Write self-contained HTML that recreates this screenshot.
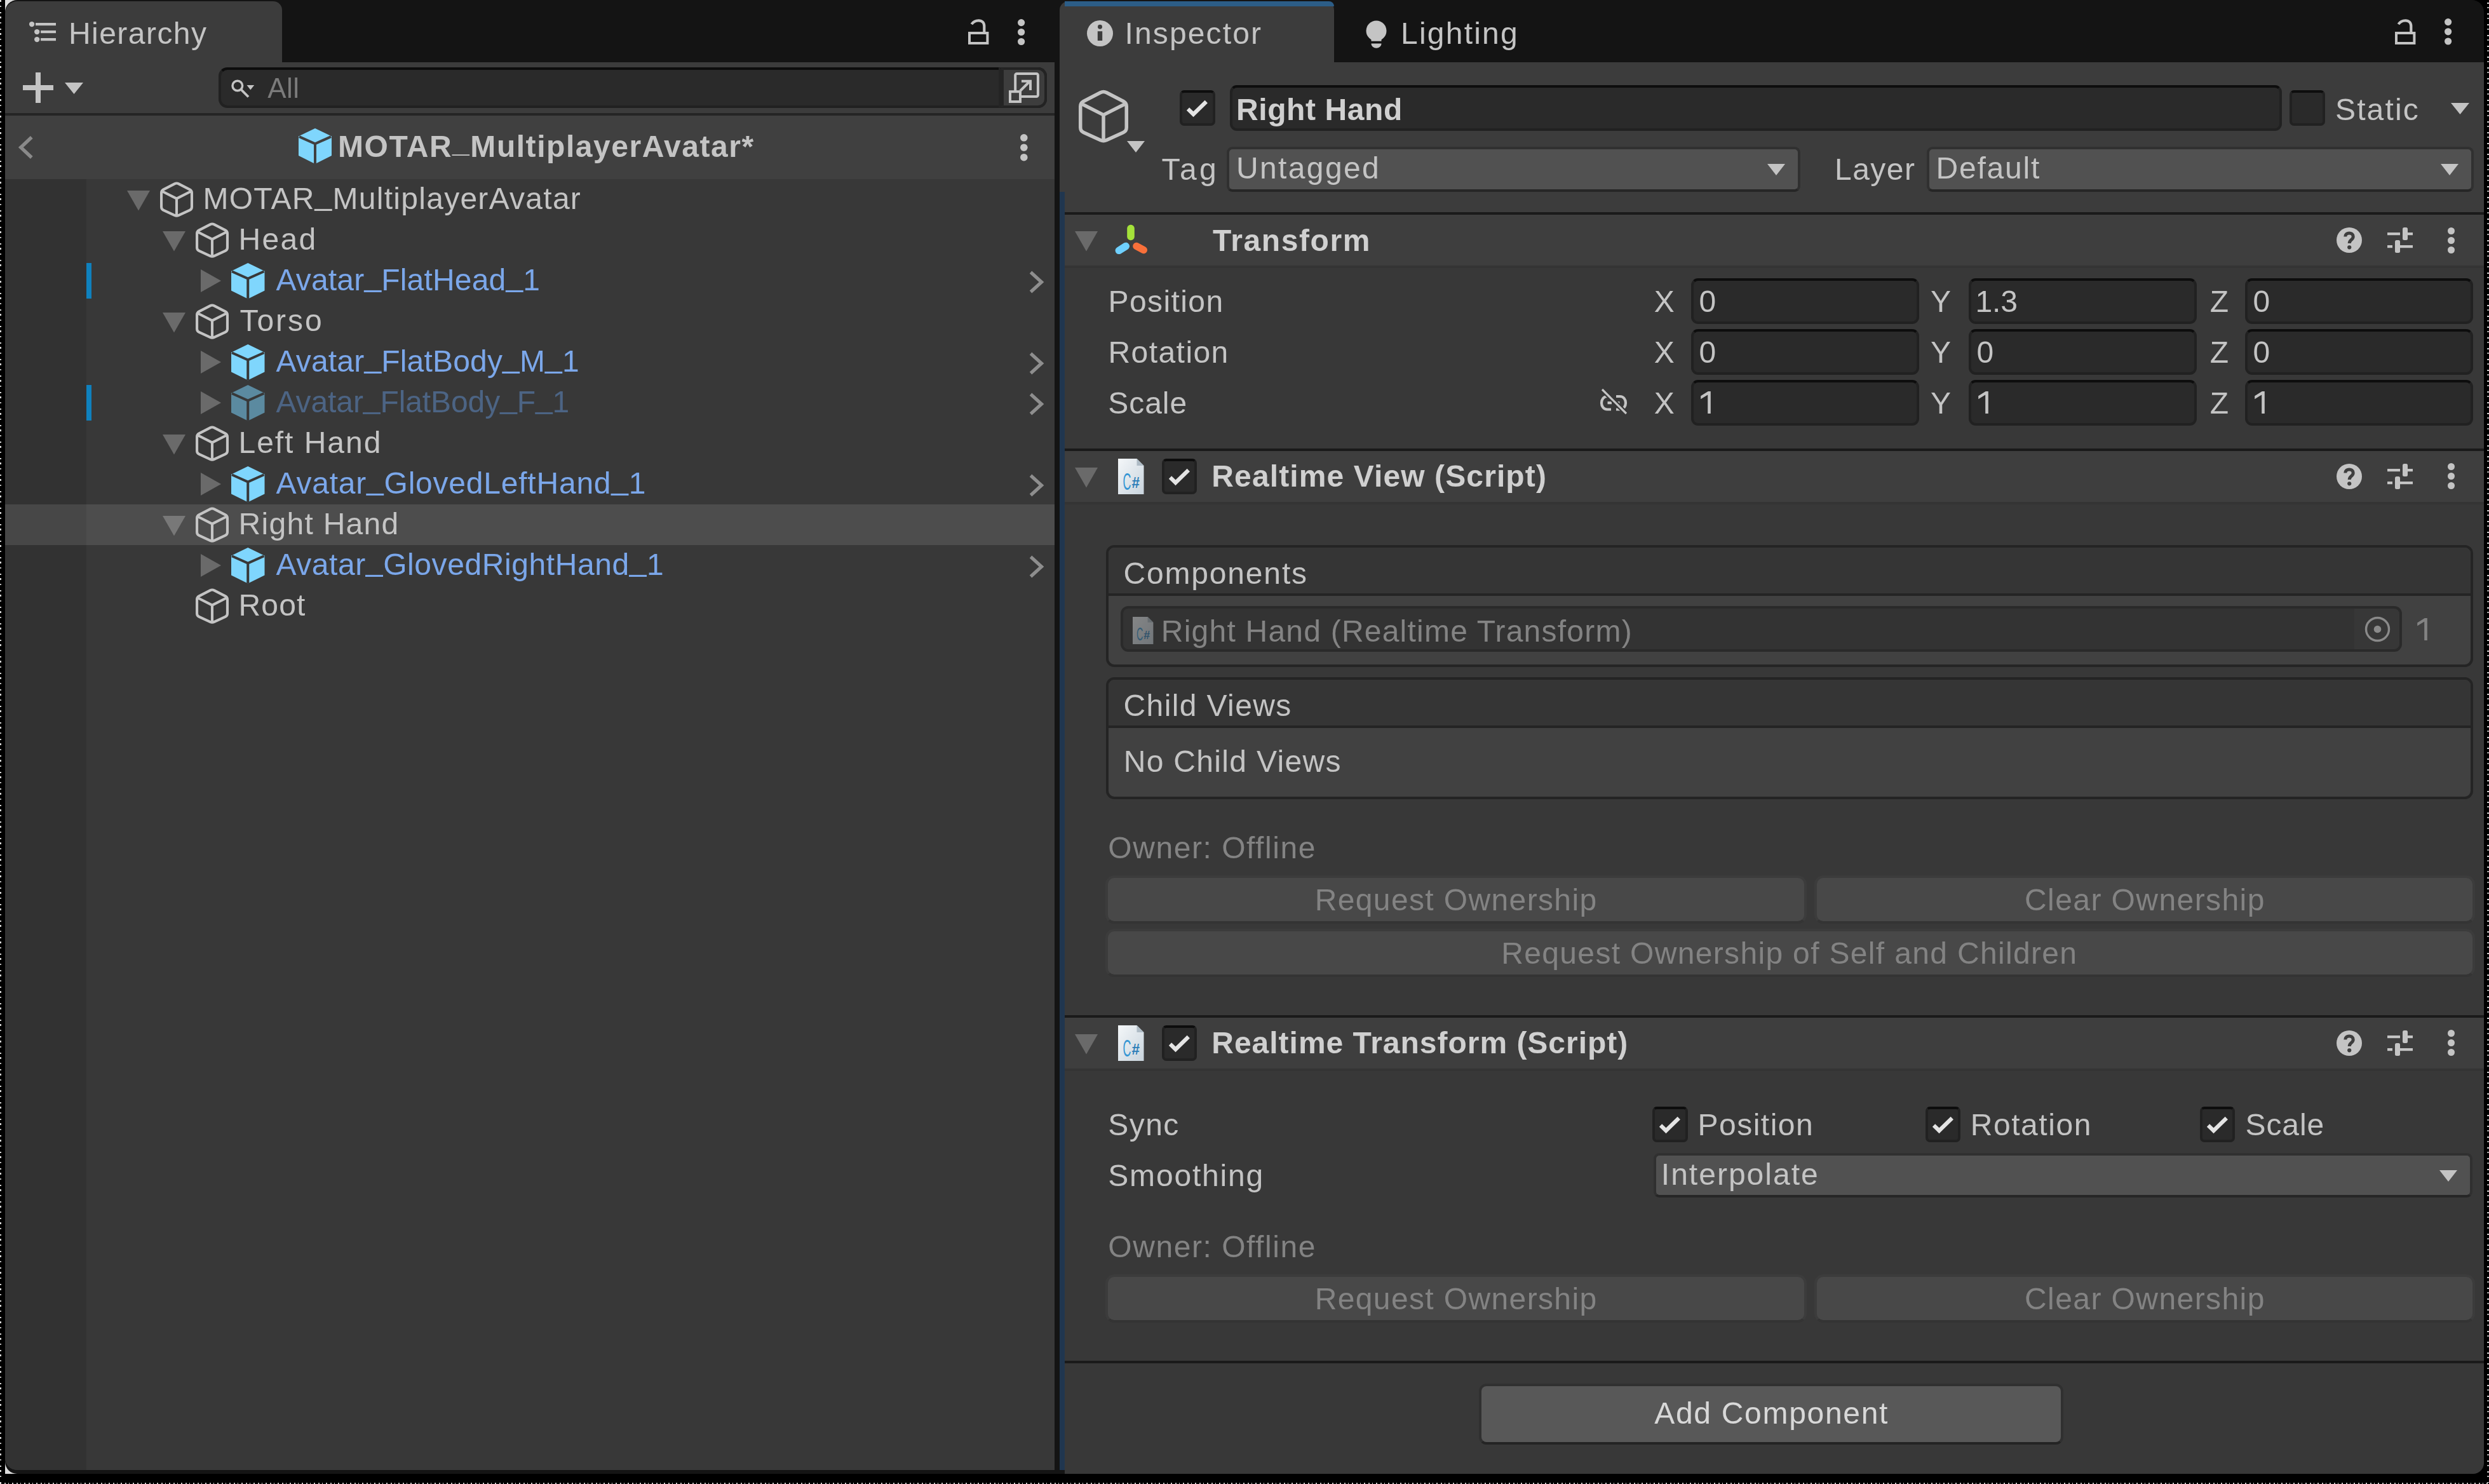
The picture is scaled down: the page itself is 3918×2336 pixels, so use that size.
<!DOCTYPE html>
<html><head><meta charset="utf-8"><title>Unity</title>
<style>
html,body{margin:0;padding:0;background:#000;}
body{width:3918px;height:2336px;position:relative;overflow:hidden;font-family:"Liberation Sans",sans-serif;font-size:48px;line-height:48px;}
div,svg,span{position:absolute;box-sizing:border-box;}
span{white-space:nowrap;}
i{font-style:normal;position:relative;top:-7.5px;}
svg{overflow:visible;}
</style></head><body>
<div style="left:8px;top:0px;width:24px;height:24px;background:#dcdcdc;"></div>
<div style="left:8px;top:2296px;width:24px;height:24px;background:#dcdcdc;"></div>
<div style="left:8px;top:0px;width:3902px;height:2320px;background:#141414;border-radius:19px;"></div>
<div style="left:8px;top:2px;width:436px;height:96px;background:#3c3c3c;border-radius:19px 14px 0 0;"></div>
<div style="left:8px;top:98px;width:1652px;height:80px;background:#3c3c3c;"></div>
<div style="left:8px;top:178px;width:1652px;height:4px;background:#252525;"></div>
<div style="left:8px;top:182px;width:1652px;height:100px;background:#404040;"></div>
<div style="left:8px;top:282px;width:1652px;height:2032px;background:#383838;border-radius:0 0 0 19px;"></div>
<div style="left:8px;top:282px;width:128px;height:2032px;background:#323232;border-radius:0 0 0 19px;"></div>
<div style="left:8px;top:794px;width:1652px;height:64px;background:#4d4d4d;"></div>
<div style="left:8px;top:794px;width:128px;height:64px;background:#474747;"></div>
<div style="left:1668px;top:2px;width:432px;height:96px;background:#3c3c3c;border-radius:14px 14px 0 0;"></div>
<div style="left:1676px;top:2px;width:424px;height:8px;background:#2c5d87;border-radius:0 14px 0 0;"></div>
<div style="left:1668px;top:98px;width:2242px;height:236px;background:#3c3c3c;"></div>
<div style="left:1676px;top:334px;width:2234px;height:1986px;background:#383838;border-radius:0 0 17px 0;"></div>
<div style="left:1668px;top:302px;width:8px;height:2012px;background:#20364f;"></div>
<div style="left:1676px;top:334px;width:2234px;height:4px;background:#1a1a1a;"></div>
<div style="left:1676px;top:338px;width:2234px;height:80px;background:#3e3e3e;"></div>
<div style="left:1676px;top:418px;width:2234px;height:3.5px;background:#343434;"></div>
<div style="left:1676px;top:706px;width:2234px;height:4px;background:#1a1a1a;"></div>
<div style="left:1676px;top:710px;width:2234px;height:80px;background:#3e3e3e;"></div>
<div style="left:1676px;top:790px;width:2234px;height:3.5px;background:#343434;"></div>
<div style="left:1676px;top:1598px;width:2234px;height:4px;background:#1a1a1a;"></div>
<div style="left:1676px;top:1602px;width:2234px;height:80px;background:#3e3e3e;"></div>
<div style="left:1676px;top:1682px;width:2234px;height:3.5px;background:#343434;"></div>
<div style="left:1676px;top:2142px;width:2234px;height:4px;background:#1a1a1a;"></div>
<svg style="left:46px;top:34px" width="42" height="33" viewBox="0 0 42 33"><circle cx="4.1" cy="4.1" r="4.2" fill="#c4c4c4"/><rect x="10.0" y="1.9999999999999996" width="32.0" height="4.2" fill="#c4c4c4"/><circle cx="12.2" cy="16.1" r="4.2" fill="#c4c4c4"/><rect x="18.1" y="14.000000000000002" width="23.9" height="4.2" fill="#c4c4c4"/><circle cx="12.2" cy="28.1" r="4.2" fill="#c4c4c4"/><rect x="18.1" y="26.0" width="23.9" height="4.2" fill="#c4c4c4"/></svg>
<svg style="left:1524px;top:30px" width="32.4" height="40" viewBox="0 0 32.4 40"><rect x="2" y="22" width="28.4" height="16" fill="none" stroke="#c4c4c4" stroke-width="4"/><path d="M5.4 8.2C8.5 3.4 12.5 2.3 16.5 2.3C22 2.3 25.3 5.8 25.3 11V21" fill="none" stroke="#c4c4c4" stroke-width="4.2"/></svg>
<svg style="left:1602.4px;top:29.5px" width="11.2" height="41.099999999999994" viewBox="0 0 11.2 41.099999999999994"><circle cx="5.6" cy="5.600000000000001" r="5.6" fill="#c4c4c4"/><circle cx="5.6" cy="20.5" r="5.6" fill="#c4c4c4"/><circle cx="5.6" cy="35.5" r="5.6" fill="#c4c4c4"/></svg>
<svg style="left:36px;top:114px" width="48" height="48" viewBox="0 0 48 48"><path d="M20 0H28V20H48V28H28V48H20V28H0V20H20Z" fill="#c4c4c4"/></svg>
<svg style="left:101.5px;top:130px" width="29" height="18" viewBox="0 0 29 18"><path d="M0 0H29L14.5 18Z" fill="#c4c4c4"/></svg>
<div style="left:344px;top:106px;width:1304px;height:64px;background:#2a2a2a;border:4px solid #212121;border-top-color:#0d0d0d;border-radius:14px;"></div>
<div style="left:1572px;top:106px;width:76px;height:64px;background:#3d3d3d;border:4px solid #232323;border-left:8px solid #242424;border-radius:0 14px 14px 0;"></div>
<svg style="left:364px;top:125px" width="38" height="30" viewBox="0 0 38 30"><circle cx="9.8" cy="10" r="7.8" fill="none" stroke="#c4c4c4" stroke-width="3.5"/><path d="M15.2 15.6L27 27.5" stroke="#c4c4c4" stroke-width="3.8"/><path d="M24.5 9H36.2L30.3 16.5Z" fill="#c4c4c4"/></svg>
<svg style="left:1588px;top:114px" width="48" height="48" viewBox="0 0 48 48"><rect x="10.2" y="2" width="35.7" height="36" rx="2.5" fill="none" stroke="#c4c4c4" stroke-width="4"/><rect x="2" y="30.2" width="16" height="15.8" fill="#3d3d3d" stroke="#c4c4c4" stroke-width="4"/><path d="M18 29L33.5 13.5M20 13.8H34V28" fill="none" stroke="#c4c4c4" stroke-width="4"/></svg>
<svg style="left:29px;top:214px" width="24" height="37" viewBox="0 0 24 37"><path d="M20.8 2L3.8 18L20.8 34" fill="none" stroke="#8a8a8a" stroke-width="5.4"/></svg>
<svg style="left:470px;top:202px" width="52" height="56" viewBox="0 0 52 56"><path d="M26.0 0L52 12.6V43.120000000000005L26.0 56L0 43.120000000000005V12.6Z" fill="#7fd6fd"/><path d="M1 13.1L26.0 24.36L51 13.1M26.0 24.36V56" fill="none" stroke="#404040" stroke-width="4"/></svg>
<svg style="left:1605.9px;top:210.79999999999998px" width="11.6" height="42.50000000000001" viewBox="0 0 11.6 42.50000000000001"><circle cx="5.8" cy="5.800000000000011" r="5.8" fill="#c4c4c4"/><circle cx="5.8" cy="21.200000000000017" r="5.8" fill="#c4c4c4"/><circle cx="5.8" cy="36.70000000000002" r="5.8" fill="#c4c4c4"/></svg>
<svg style="left:200px;top:300px" width="36" height="31.5" viewBox="0 0 36 31.5"><path d="M0 0H36L18.0 31.5Z" fill="#6a6a6a"/></svg>
<svg style="left:252px;top:286px" width="52" height="56" viewBox="0 0 52 56"><path d="M22.77 3.31Q26.00 1.64 29.23 3.31L46.72 12.33Q49.95 14.00 49.95 17.64L49.95 39.76Q49.95 43.40 46.64 44.91L29.31 52.85Q26.00 54.36 22.69 52.85L5.36 44.91Q2.05 43.40 2.05 39.76L2.05 17.64Q2.05 14.00 5.28 12.33Z M3.05 15.0L26.0 26.599999999999998L48.95 15.0M26.0 26.599999999999998V53.36" fill="none" stroke="#c4c4c4" stroke-width="4.1" stroke-linejoin="round" stroke-linecap="round"/></svg>
<svg style="left:256px;top:364px" width="36" height="31.5" viewBox="0 0 36 31.5"><path d="M0 0H36L18.0 31.5Z" fill="#6a6a6a"/></svg>
<svg style="left:308px;top:350px" width="52" height="56" viewBox="0 0 52 56"><path d="M22.77 3.31Q26.00 1.64 29.23 3.31L46.72 12.33Q49.95 14.00 49.95 17.64L49.95 39.76Q49.95 43.40 46.64 44.91L29.31 52.85Q26.00 54.36 22.69 52.85L5.36 44.91Q2.05 43.40 2.05 39.76L2.05 17.64Q2.05 14.00 5.28 12.33Z M3.05 15.0L26.0 26.599999999999998L48.95 15.0M26.0 26.599999999999998V53.36" fill="none" stroke="#c4c4c4" stroke-width="4.1" stroke-linejoin="round" stroke-linecap="round"/></svg>
<svg style="left:316px;top:424px" width="32" height="36" viewBox="0 0 32 36"><path d="M0 0L32 18.0L0 36Z" fill="#6a6a6a"/></svg>
<svg style="left:364px;top:414px" width="52.5" height="56.5" viewBox="0 0 52.5 56.5"><path d="M26.25 0L52.5 12.7125V43.505L26.25 56.5L0 43.505V12.7125Z" fill="#7fd6fd"/><path d="M1 13.2125L26.25 24.5775L51.5 13.2125M26.25 24.5775V56.5" fill="none" stroke="#383838" stroke-width="4"/></svg>
<svg style="left:1620px;top:426px" width="23" height="36" viewBox="0 0 23 36"><path d="M2.5 2.5L19.5 18.0L2.5 33.5" fill="none" stroke="#8e8e8e" stroke-width="5.2"/></svg>
<svg style="left:256px;top:492px" width="36" height="31.5" viewBox="0 0 36 31.5"><path d="M0 0H36L18.0 31.5Z" fill="#6a6a6a"/></svg>
<svg style="left:308px;top:478px" width="52" height="56" viewBox="0 0 52 56"><path d="M22.77 3.31Q26.00 1.64 29.23 3.31L46.72 12.33Q49.95 14.00 49.95 17.64L49.95 39.76Q49.95 43.40 46.64 44.91L29.31 52.85Q26.00 54.36 22.69 52.85L5.36 44.91Q2.05 43.40 2.05 39.76L2.05 17.64Q2.05 14.00 5.28 12.33Z M3.05 15.0L26.0 26.599999999999998L48.95 15.0M26.0 26.599999999999998V53.36" fill="none" stroke="#c4c4c4" stroke-width="4.1" stroke-linejoin="round" stroke-linecap="round"/></svg>
<svg style="left:316px;top:552px" width="32" height="36" viewBox="0 0 32 36"><path d="M0 0L32 18.0L0 36Z" fill="#6a6a6a"/></svg>
<svg style="left:364px;top:542px" width="52.5" height="56.5" viewBox="0 0 52.5 56.5"><path d="M26.25 0L52.5 12.7125V43.505L26.25 56.5L0 43.505V12.7125Z" fill="#7fd6fd"/><path d="M1 13.2125L26.25 24.5775L51.5 13.2125M26.25 24.5775V56.5" fill="none" stroke="#383838" stroke-width="4"/></svg>
<svg style="left:1620px;top:554px" width="23" height="36" viewBox="0 0 23 36"><path d="M2.5 2.5L19.5 18.0L2.5 33.5" fill="none" stroke="#8e8e8e" stroke-width="5.2"/></svg>
<svg style="left:316px;top:616px" width="32" height="36" viewBox="0 0 32 36"><path d="M0 0L32 18.0L0 36Z" fill="#6a6a6a"/></svg>
<svg style="left:364px;top:606px" width="52.5" height="56.5" viewBox="0 0 52.5 56.5"><path d="M26.25 0L52.5 12.7125V43.505L26.25 56.5L0 43.505V12.7125Z" fill="#5b8aa0"/><path d="M1 13.2125L26.25 24.5775L51.5 13.2125M26.25 24.5775V56.5" fill="none" stroke="#383838" stroke-width="4"/></svg>
<svg style="left:1620px;top:618px" width="23" height="36" viewBox="0 0 23 36"><path d="M2.5 2.5L19.5 18.0L2.5 33.5" fill="none" stroke="#8e8e8e" stroke-width="5.2"/></svg>
<svg style="left:256px;top:684px" width="36" height="31.5" viewBox="0 0 36 31.5"><path d="M0 0H36L18.0 31.5Z" fill="#6a6a6a"/></svg>
<svg style="left:308px;top:670px" width="52" height="56" viewBox="0 0 52 56"><path d="M22.77 3.31Q26.00 1.64 29.23 3.31L46.72 12.33Q49.95 14.00 49.95 17.64L49.95 39.76Q49.95 43.40 46.64 44.91L29.31 52.85Q26.00 54.36 22.69 52.85L5.36 44.91Q2.05 43.40 2.05 39.76L2.05 17.64Q2.05 14.00 5.28 12.33Z M3.05 15.0L26.0 26.599999999999998L48.95 15.0M26.0 26.599999999999998V53.36" fill="none" stroke="#c4c4c4" stroke-width="4.1" stroke-linejoin="round" stroke-linecap="round"/></svg>
<svg style="left:316px;top:744px" width="32" height="36" viewBox="0 0 32 36"><path d="M0 0L32 18.0L0 36Z" fill="#6a6a6a"/></svg>
<svg style="left:364px;top:734px" width="52.5" height="56.5" viewBox="0 0 52.5 56.5"><path d="M26.25 0L52.5 12.7125V43.505L26.25 56.5L0 43.505V12.7125Z" fill="#7fd6fd"/><path d="M1 13.2125L26.25 24.5775L51.5 13.2125M26.25 24.5775V56.5" fill="none" stroke="#383838" stroke-width="4"/></svg>
<svg style="left:1620px;top:746px" width="23" height="36" viewBox="0 0 23 36"><path d="M2.5 2.5L19.5 18.0L2.5 33.5" fill="none" stroke="#8e8e8e" stroke-width="5.2"/></svg>
<svg style="left:256px;top:812px" width="36" height="31.5" viewBox="0 0 36 31.5"><path d="M0 0H36L18.0 31.5Z" fill="#787878"/></svg>
<svg style="left:308px;top:798px" width="52" height="56" viewBox="0 0 52 56"><path d="M22.77 3.31Q26.00 1.64 29.23 3.31L46.72 12.33Q49.95 14.00 49.95 17.64L49.95 39.76Q49.95 43.40 46.64 44.91L29.31 52.85Q26.00 54.36 22.69 52.85L5.36 44.91Q2.05 43.40 2.05 39.76L2.05 17.64Q2.05 14.00 5.28 12.33Z M3.05 15.0L26.0 26.599999999999998L48.95 15.0M26.0 26.599999999999998V53.36" fill="none" stroke="#c4c4c4" stroke-width="4.1" stroke-linejoin="round" stroke-linecap="round"/></svg>
<svg style="left:316px;top:872px" width="32" height="36" viewBox="0 0 32 36"><path d="M0 0L32 18.0L0 36Z" fill="#6a6a6a"/></svg>
<svg style="left:364px;top:862px" width="52.5" height="56.5" viewBox="0 0 52.5 56.5"><path d="M26.25 0L52.5 12.7125V43.505L26.25 56.5L0 43.505V12.7125Z" fill="#7fd6fd"/><path d="M1 13.2125L26.25 24.5775L51.5 13.2125M26.25 24.5775V56.5" fill="none" stroke="#383838" stroke-width="4"/></svg>
<svg style="left:1620px;top:874px" width="23" height="36" viewBox="0 0 23 36"><path d="M2.5 2.5L19.5 18.0L2.5 33.5" fill="none" stroke="#8e8e8e" stroke-width="5.2"/></svg>
<svg style="left:308px;top:926px" width="52" height="56" viewBox="0 0 52 56"><path d="M22.77 3.31Q26.00 1.64 29.23 3.31L46.72 12.33Q49.95 14.00 49.95 17.64L49.95 39.76Q49.95 43.40 46.64 44.91L29.31 52.85Q26.00 54.36 22.69 52.85L5.36 44.91Q2.05 43.40 2.05 39.76L2.05 17.64Q2.05 14.00 5.28 12.33Z M3.05 15.0L26.0 26.599999999999998L48.95 15.0M26.0 26.599999999999998V53.36" fill="none" stroke="#c4c4c4" stroke-width="4.1" stroke-linejoin="round" stroke-linecap="round"/></svg>
<div style="left:136px;top:414px;width:8px;height:56px;background:#0f81be;"></div>
<div style="left:136px;top:606px;width:8px;height:56px;background:#0f81be;"></div>
<svg style="left:1711px;top:32px" width="41" height="41" viewBox="0 0 41 41"><circle cx="20.5" cy="20.5" r="20.5" fill="#c4c4c4"/><circle cx="20.5" cy="10.25" r="3.4850000000000003" fill="#3c3c3c"/><rect x="16.81" y="17.22" width="7.38" height="14.76" fill="#3c3c3c"/></svg>
<svg style="left:2150px;top:32px" width="34" height="45" viewBox="0 0 34 45"><circle cx="16.5" cy="16.5" r="16" fill="#c4c4c4"/><rect x="8.5" y="27" width="16" height="6" fill="#c4c4c4"/><path d="M8.5 36.5H24.5C24.5 46 8.5 46 8.5 36.5Z" fill="#c4c4c4"/><rect x="7" y="32.8" width="19" height="3" fill="#141414"/></svg>
<svg style="left:3770px;top:30px" width="32.4" height="40" viewBox="0 0 32.4 40"><rect x="2" y="22" width="28.4" height="16" fill="none" stroke="#c4c4c4" stroke-width="4"/><path d="M5.4 8.2C8.5 3.4 12.5 2.3 16.5 2.3C22 2.3 25.3 5.8 25.3 11V21" fill="none" stroke="#c4c4c4" stroke-width="4.2"/></svg>
<svg style="left:3848.4px;top:29.199999999999996px" width="11.2" height="41.60000000000001" viewBox="0 0 11.2 41.60000000000001"><circle cx="5.6" cy="5.600000000000001" r="5.6" fill="#c4c4c4"/><circle cx="5.6" cy="20.800000000000004" r="5.6" fill="#c4c4c4"/><circle cx="5.6" cy="36.00000000000001" r="5.6" fill="#c4c4c4"/></svg>
<svg style="left:1698px;top:141px" width="78" height="84" viewBox="0 0 78 84"><path d="M34.15 4.71Q39.00 2.20 43.85 4.71L70.40 18.49Q75.25 21.00 75.25 26.46L75.25 59.64Q75.25 65.10 70.29 67.38L43.96 79.52Q39.00 81.80 34.04 79.52L7.71 67.38Q2.75 65.10 2.75 59.64L2.75 26.46Q2.75 21.00 7.60 18.49Z M3.75 22.0L39.0 39.9L74.25 22.0M39.0 39.9V80.8" fill="none" stroke="#c4c4c4" stroke-width="5.5" stroke-linejoin="round" stroke-linecap="round"/></svg>
<svg style="left:1774px;top:222px" width="28" height="18" viewBox="0 0 28 18"><path d="M0 0H28L14.0 18Z" fill="#c4c4c4"/></svg>
<div style="left:1857px;top:142px;width:55.5px;height:55.5px;background:#2a2a2a;border:4px solid #212121;border-top-color:#0d0d0d;border-radius:7px;"></div>
<svg style="left:1857px;top:142px" width="55.5" height="55.5" viewBox="0 0 55.5 55.5"><path d="M13 29.5L21.5 37.8L41.8 18" fill="none" stroke="#e4e4e4" stroke-width="6.2"/></svg>
<div style="left:1936px;top:134px;width:1656px;height:72px;background:#2a2a2a;border:4px solid #212121;border-top-color:#0d0d0d;border-radius:11px;"></div>
<div style="left:3604px;top:142px;width:55.5px;height:55.5px;background:#2a2a2a;border:4px solid #212121;border-top-color:#0d0d0d;border-radius:7px;"></div>
<svg style="left:3858px;top:162px" width="29" height="18" viewBox="0 0 29 18"><path d="M0 0H29L14.5 18Z" fill="#c4c4c4"/></svg>
<div style="left:1931px;top:231px;width:903px;height:71px;background:#515151;border:4px solid #303030;border-bottom-color:#262626;border-radius:9px;"></div>
<svg style="left:2782px;top:258.0px" width="28" height="18" viewBox="0 0 28 18"><path d="M0 0H28L14.0 18Z" fill="#c4c4c4"/></svg>
<div style="left:3033px;top:231px;width:861px;height:71px;background:#515151;border:4px solid #303030;border-bottom-color:#262626;border-radius:9px;"></div>
<svg style="left:3842px;top:258.0px" width="28" height="18" viewBox="0 0 28 18"><path d="M0 0H28L14.0 18Z" fill="#c4c4c4"/></svg>
<svg style="left:1692px;top:364px" width="36" height="31.5" viewBox="0 0 36 31.5"><path d="M0 0H36L18.0 31.5Z" fill="#6a6a6a"/></svg>
<svg style="left:1750px;top:350px" width="60" height="56" viewBox="0 0 60 56"><path d="M30 9.5V22.5" stroke="#a4e23a" stroke-width="11.6" stroke-linecap="round"/><path d="M22.2 37.5L11.4 44.3" stroke="#6fd0ff" stroke-width="11.6" stroke-linecap="round"/><path d="M39 37.5L50.2 43.5" stroke="#f8703a" stroke-width="11.6" stroke-linecap="round"/></svg>
<svg style="left:3678px;top:358px" width="40" height="40" viewBox="0 0 40 40"><circle cx="20.0" cy="20.0" r="20.0" fill="#c4c4c4"/><path d="M13.8 14.5C13.8 7 26.2 7 26.2 14.5C26.2 19.5 20.2 19.5 20.2 25" fill="none" stroke="#3e3e3e" stroke-width="5"/><circle cx="20.2" cy="31.3" r="3.1" fill="#3e3e3e"/></svg>
<svg style="left:3758px;top:358px" width="40" height="40" viewBox="0 0 40 40"><rect x="0" y="8" width="20" height="4.2" fill="#c4c4c4"/><rect x="24" y="0" width="8" height="20" rx="2.5" fill="#c4c4c4"/><rect x="31" y="8" width="9" height="4.2" fill="#c4c4c4"/><rect x="0" y="28" width="8" height="4.2" fill="#c4c4c4"/><rect x="12" y="20" width="8" height="20" rx="2.5" fill="#c4c4c4"/><rect x="19" y="28" width="21" height="4.2" fill="#c4c4c4"/></svg>
<svg style="left:3852.7px;top:357.5px" width="11.0" height="41.0" viewBox="0 0 11.0 41.0"><circle cx="5.5" cy="5.5" r="5.5" fill="#c4c4c4"/><circle cx="5.5" cy="20.5" r="5.5" fill="#c4c4c4"/><circle cx="5.5" cy="35.5" r="5.5" fill="#c4c4c4"/></svg>
<div style="left:2662px;top:438px;width:359px;height:72px;background:#2a2a2a;border:4px solid #212121;border-top-color:#0d0d0d;border-radius:11px;"></div>
<div style="left:3099px;top:438px;width:359px;height:72px;background:#2a2a2a;border:4px solid #212121;border-top-color:#0d0d0d;border-radius:11px;"></div>
<div style="left:3534px;top:438px;width:359px;height:72px;background:#2a2a2a;border:4px solid #212121;border-top-color:#0d0d0d;border-radius:11px;"></div>
<div style="left:2662px;top:518px;width:359px;height:72px;background:#2a2a2a;border:4px solid #212121;border-top-color:#0d0d0d;border-radius:11px;"></div>
<div style="left:3099px;top:518px;width:359px;height:72px;background:#2a2a2a;border:4px solid #212121;border-top-color:#0d0d0d;border-radius:11px;"></div>
<div style="left:3534px;top:518px;width:359px;height:72px;background:#2a2a2a;border:4px solid #212121;border-top-color:#0d0d0d;border-radius:11px;"></div>
<div style="left:2662px;top:598px;width:359px;height:72px;background:#2a2a2a;border:4px solid #212121;border-top-color:#0d0d0d;border-radius:11px;"></div>
<svg style="left:2675.6px;top:616.4px" width="17" height="35" viewBox="0 0 17 35"><path d="M16.8 0V35H12.2V5.4L1.2 12.2V7.2L12.8 0Z" fill="#c4c4c4"/></svg>
<div style="left:3099px;top:598px;width:359px;height:72px;background:#2a2a2a;border:4px solid #212121;border-top-color:#0d0d0d;border-radius:11px;"></div>
<svg style="left:3112.6px;top:616.4px" width="17" height="35" viewBox="0 0 17 35"><path d="M16.8 0V35H12.2V5.4L1.2 12.2V7.2L12.8 0Z" fill="#c4c4c4"/></svg>
<div style="left:3534px;top:598px;width:359px;height:72px;background:#2a2a2a;border:4px solid #212121;border-top-color:#0d0d0d;border-radius:11px;"></div>
<svg style="left:3547.6px;top:616.4px" width="17" height="35" viewBox="0 0 17 35"><path d="M16.8 0V35H12.2V5.4L1.2 12.2V7.2L12.8 0Z" fill="#c4c4c4"/></svg>
<svg style="left:2516px;top:612px" width="48" height="44" viewBox="0 0 48 44"><path d="M20 12H14C2 12 2 32.5 14 32.5H20M28 12H34C46 12 46 32.5 34 32.5H28" fill="none" stroke="#c4c4c4" stroke-width="4.2"/><path d="M14.5 22.2H21M27 22.2H33.5" stroke="#c4c4c4" stroke-width="4.2"/><path d="M6 1L44 39" stroke="#383838" stroke-width="7.5"/><path d="M6 1L44 39" stroke="#c4c4c4" stroke-width="3.2"/></svg>
<svg style="left:1692px;top:736px" width="36" height="31.5" viewBox="0 0 36 31.5"><path d="M0 0H36L18.0 31.5Z" fill="#6a6a6a"/></svg>
<svg style="left:1759.6px;top:722px" width="40.5" height="56" viewBox="0 0 40.5 56"><g opacity="1"><defs><linearGradient id="g1759722" x1="0" y1="0" x2="1" y2="1"><stop offset="0" stop-color="#f4f7f9"/><stop offset="1" stop-color="#c9d4dd"/></linearGradient></defs><path d="M0 0H29.5L40.5 11.0V56H0Z" fill="url(#g1759722)"/><path d="M29.5 0V11.0H40.5Z" fill="#aebbc5"/><text x="7.5" y="48.5" font-family="Liberation Sans" font-size="36.0" fill="#3596d4" textLength="13.0" lengthAdjust="spacingAndGlyphs">C</text><text x="21.5" y="45.5" font-family="Liberation Sans" font-weight="bold" font-size="23.0" fill="#2a7db8" textLength="12.5" lengthAdjust="spacingAndGlyphs">#</text></g></svg>
<div style="left:1828.5px;top:722px;width:55.5px;height:55.5px;background:#2a2a2a;border:4px solid #212121;border-top-color:#0d0d0d;border-radius:7px;"></div>
<svg style="left:1828.5px;top:722px" width="55.5" height="55.5" viewBox="0 0 55.5 55.5"><path d="M13 29.5L21.5 37.8L41.8 18" fill="none" stroke="#e4e4e4" stroke-width="6.2"/></svg>
<svg style="left:3678px;top:729.6px" width="40" height="40" viewBox="0 0 40 40"><circle cx="20.0" cy="20.0" r="20.0" fill="#c4c4c4"/><path d="M13.8 14.5C13.8 7 26.2 7 26.2 14.5C26.2 19.5 20.2 19.5 20.2 25" fill="none" stroke="#3e3e3e" stroke-width="5"/><circle cx="20.2" cy="31.3" r="3.1" fill="#3e3e3e"/></svg>
<svg style="left:3758px;top:729.6px" width="40" height="40" viewBox="0 0 40 40"><rect x="0" y="8" width="20" height="4.2" fill="#c4c4c4"/><rect x="24" y="0" width="8" height="20" rx="2.5" fill="#c4c4c4"/><rect x="31" y="8" width="9" height="4.2" fill="#c4c4c4"/><rect x="0" y="28" width="8" height="4.2" fill="#c4c4c4"/><rect x="12" y="20" width="8" height="20" rx="2.5" fill="#c4c4c4"/><rect x="19" y="28" width="21" height="4.2" fill="#c4c4c4"/></svg>
<svg style="left:3852.7px;top:729.1px" width="11.0" height="41.0" viewBox="0 0 11.0 41.0"><circle cx="5.5" cy="5.5" r="5.5" fill="#c4c4c4"/><circle cx="5.5" cy="20.5" r="5.5" fill="#c4c4c4"/><circle cx="5.5" cy="35.5" r="5.5" fill="#c4c4c4"/></svg>
<div style="left:1740.5px;top:858px;width:2152.5px;height:192px;background:#414141;border:4px solid #242424;border-radius:13px;"></div>
<div style="left:1744.5px;top:862px;width:2144.5px;height:72px;background:#353535;border-radius:9px 9px 0 0;"></div>
<div style="left:1744.5px;top:934px;width:2144.5px;height:4px;background:#242424;"></div>
<div style="left:1764px;top:954px;width:2017px;height:72px;background:#333333;border:4px solid #2a2a2a;border-radius:12px;"></div>
<div style="left:3706px;top:958px;width:71px;height:64px;background:#373737;border-radius:0 9px 9px 0;"></div>
<svg style="left:1783.4px;top:971px" width="32.4" height="43" viewBox="0 0 32.4 43"><g opacity="0.42"><defs><linearGradient id="g1783971" x1="0" y1="0" x2="1" y2="1"><stop offset="0" stop-color="#f4f7f9"/><stop offset="1" stop-color="#c9d4dd"/></linearGradient></defs><path d="M0 0H23.6L32.4 8.799999999999999V43H0Z" fill="url(#g1783971)"/><path d="M23.6 0V8.799999999999999H32.4Z" fill="#aebbc5"/><text x="5.999999999999999" y="37.0" font-family="Liberation Sans" font-size="28.799999999999997" fill="#3596d4" textLength="10.399999999999999" lengthAdjust="spacingAndGlyphs">C</text><text x="17.2" y="34.6" font-family="Liberation Sans" font-weight="bold" font-size="18.4" fill="#2a7db8" textLength="10.0" lengthAdjust="spacingAndGlyphs">#</text></g></svg>
<svg style="left:3722px;top:970px" width="41" height="41" viewBox="0 0 41 41"><circle cx="20.5" cy="20.5" r="18" fill="none" stroke="#8a8a8a" stroke-width="3.4"/><circle cx="20.5" cy="20.5" r="5.8" fill="#8a8a8a"/></svg>
<svg style="left:3804px;top:973.4px" width="17" height="35" viewBox="0 0 17 35"><path d="M16.8 0V35H12.2V5.4L1.2 12.2V7.2L12.8 0Z" fill="#838383"/></svg>
<div style="left:1740.5px;top:1066px;width:2152.5px;height:192px;background:#414141;border:4px solid #242424;border-radius:13px;"></div>
<div style="left:1744.5px;top:1070px;width:2144.5px;height:72px;background:#353535;border-radius:9px 9px 0 0;"></div>
<div style="left:1744.5px;top:1142px;width:2144.5px;height:4px;background:#242424;"></div>
<div style="left:1740px;top:1378px;width:1104px;height:76px;background:#484848;border:4px solid #3c3c3c;border-bottom-color:#343434;border-radius:14px;"></div>
<div style="left:2856px;top:1378px;width:1040px;height:76px;background:#484848;border:4px solid #3c3c3c;border-bottom-color:#343434;border-radius:14px;"></div>
<div style="left:1740px;top:1462px;width:2156px;height:76px;background:#484848;border:4px solid #3c3c3c;border-bottom-color:#343434;border-radius:14px;"></div>
<svg style="left:1692px;top:1628px" width="36" height="31.5" viewBox="0 0 36 31.5"><path d="M0 0H36L18.0 31.5Z" fill="#6a6a6a"/></svg>
<svg style="left:1759.6px;top:1614px" width="40.5" height="56" viewBox="0 0 40.5 56"><g opacity="1"><defs><linearGradient id="g17591614" x1="0" y1="0" x2="1" y2="1"><stop offset="0" stop-color="#f4f7f9"/><stop offset="1" stop-color="#c9d4dd"/></linearGradient></defs><path d="M0 0H29.5L40.5 11.0V56H0Z" fill="url(#g17591614)"/><path d="M29.5 0V11.0H40.5Z" fill="#aebbc5"/><text x="7.5" y="48.5" font-family="Liberation Sans" font-size="36.0" fill="#3596d4" textLength="13.0" lengthAdjust="spacingAndGlyphs">C</text><text x="21.5" y="45.5" font-family="Liberation Sans" font-weight="bold" font-size="23.0" fill="#2a7db8" textLength="12.5" lengthAdjust="spacingAndGlyphs">#</text></g></svg>
<div style="left:1828.5px;top:1614px;width:55.5px;height:55.5px;background:#2a2a2a;border:4px solid #212121;border-top-color:#0d0d0d;border-radius:7px;"></div>
<svg style="left:1828.5px;top:1614px" width="55.5" height="55.5" viewBox="0 0 55.5 55.5"><path d="M13 29.5L21.5 37.8L41.8 18" fill="none" stroke="#e4e4e4" stroke-width="6.2"/></svg>
<svg style="left:3678px;top:1621.6px" width="40" height="40" viewBox="0 0 40 40"><circle cx="20.0" cy="20.0" r="20.0" fill="#c4c4c4"/><path d="M13.8 14.5C13.8 7 26.2 7 26.2 14.5C26.2 19.5 20.2 19.5 20.2 25" fill="none" stroke="#3e3e3e" stroke-width="5"/><circle cx="20.2" cy="31.3" r="3.1" fill="#3e3e3e"/></svg>
<svg style="left:3758px;top:1621.6px" width="40" height="40" viewBox="0 0 40 40"><rect x="0" y="8" width="20" height="4.2" fill="#c4c4c4"/><rect x="24" y="0" width="8" height="20" rx="2.5" fill="#c4c4c4"/><rect x="31" y="8" width="9" height="4.2" fill="#c4c4c4"/><rect x="0" y="28" width="8" height="4.2" fill="#c4c4c4"/><rect x="12" y="20" width="8" height="20" rx="2.5" fill="#c4c4c4"/><rect x="19" y="28" width="21" height="4.2" fill="#c4c4c4"/></svg>
<svg style="left:3852.7px;top:1621.1px" width="11.0" height="41.0" viewBox="0 0 11.0 41.0"><circle cx="5.5" cy="5.5" r="5.5" fill="#c4c4c4"/><circle cx="5.5" cy="20.5" r="5.5" fill="#c4c4c4"/><circle cx="5.5" cy="35.5" r="5.5" fill="#c4c4c4"/></svg>
<div style="left:2601px;top:1742px;width:55.5px;height:55.5px;background:#2a2a2a;border:4px solid #212121;border-top-color:#0d0d0d;border-radius:7px;"></div>
<svg style="left:2601px;top:1742px" width="55.5" height="55.5" viewBox="0 0 55.5 55.5"><path d="M13 29.5L21.5 37.8L41.8 18" fill="none" stroke="#e4e4e4" stroke-width="6.2"/></svg>
<div style="left:3030.5px;top:1742px;width:55.5px;height:55.5px;background:#2a2a2a;border:4px solid #212121;border-top-color:#0d0d0d;border-radius:7px;"></div>
<svg style="left:3030.5px;top:1742px" width="55.5" height="55.5" viewBox="0 0 55.5 55.5"><path d="M13 29.5L21.5 37.8L41.8 18" fill="none" stroke="#e4e4e4" stroke-width="6.2"/></svg>
<div style="left:3462.5px;top:1742px;width:55.5px;height:55.5px;background:#2a2a2a;border:4px solid #212121;border-top-color:#0d0d0d;border-radius:7px;"></div>
<svg style="left:3462.5px;top:1742px" width="55.5" height="55.5" viewBox="0 0 55.5 55.5"><path d="M13 29.5L21.5 37.8L41.8 18" fill="none" stroke="#e4e4e4" stroke-width="6.2"/></svg>
<div style="left:2603px;top:1815px;width:1289px;height:70px;background:#515151;border:4px solid #303030;border-bottom-color:#262626;border-radius:9px;"></div>
<svg style="left:3840px;top:1841.5px" width="28" height="18" viewBox="0 0 28 18"><path d="M0 0H28L14.0 18Z" fill="#c4c4c4"/></svg>
<div style="left:1740px;top:2006px;width:1104px;height:76px;background:#484848;border:4px solid #3c3c3c;border-bottom-color:#343434;border-radius:14px;"></div>
<div style="left:2856px;top:2006px;width:1040px;height:76px;background:#484848;border:4px solid #3c3c3c;border-bottom-color:#343434;border-radius:14px;"></div>
<div style="left:2328px;top:2178px;width:920px;height:96px;background:#585858;border:4px solid #303030;border-bottom-color:#242424;border-radius:12px;"></div>
<div style="left:0px;top:0px;width:2px;height:2336px;background:repeating-linear-gradient(180deg,#fff 0 3px,#000 3px 9px,#ddd 9px 11px,#000 11px 19px,#fff 19px 21px,#000 21px 26px);opacity:.85;"></div>
<div style="left:3915px;top:0px;width:3px;height:2336px;background:repeating-linear-gradient(180deg,#000 0 4px,#fff 4px 6px,#000 6px 11px,#ccc 11px 13px,#000 13px 17px);opacity:.8;"></div>
<div style="left:0px;top:2334px;width:3918px;height:2px;background:repeating-linear-gradient(90deg,#fff 0 2px,#000 2px 7px,#eee 7px 9px,#000 9px 13px,#fff 13px 14px,#000 14px 19px);opacity:.8;"></div>
<div style="left:0;top:0;width:3918px;height:2336px;will-change:transform">
<span style="left:108.0px;top:29.1px;color:#c4c4c4;letter-spacing:1.45px;">Hierarchy</span>
<span style="left:421.3px;top:116.7px;color:#7b7b7b;letter-spacing:0.39px;font-size:44px;line-height:44px;">All</span>
<span style="left:532.0px;top:206.5px;color:#c4c4c4;letter-spacing:1.54px;font-weight:bold;">MOTAR<i>_</i>MultiplayerAvatar*</span>
<span style="left:319.5px;top:289.3px;color:#c4c4c4;letter-spacing:1.27px;">MOTAR<i>_</i>MultiplayerAvatar</span>
<span style="left:375.5px;top:353.3px;color:#c4c4c4;letter-spacing:2.28px;">Head</span>
<span style="left:434.5px;top:417.3px;color:#7ba7ea;letter-spacing:0.17px;">Avatar<i>_</i>FlatHead<i>_</i>1</span>
<span style="left:377.5px;top:481.3px;color:#c4c4c4;letter-spacing:2.96px;">Torso</span>
<span style="left:434.5px;top:545.3px;color:#7ba7ea;letter-spacing:0.17px;">Avatar<i>_</i>FlatBody<i>_</i>M<i>_</i>1</span>
<span style="left:434.5px;top:609.3px;color:#4c6484;letter-spacing:-0.09px;">Avatar<i>_</i>FlatBody<i>_</i>F<i>_</i>1</span>
<span style="left:375.5px;top:673.3px;color:#c4c4c4;letter-spacing:1.96px;">Left Hand</span>
<span style="left:434.5px;top:737.3px;color:#7ba7ea;letter-spacing:0.78px;">Avatar<i>_</i>GlovedLeftHand<i>_</i>1</span>
<span style="left:375.5px;top:801.3px;color:#c4c4c4;letter-spacing:1.29px;">Right Hand</span>
<span style="left:434.5px;top:865.3px;color:#7ba7ea;letter-spacing:0.58px;">Avatar<i>_</i>GlovedRightHand<i>_</i>1</span>
<span style="left:375.5px;top:929.3px;color:#c4c4c4;letter-spacing:1.15px;">Root</span>
<span style="left:1770.6px;top:29.1px;color:#c4c4c4;letter-spacing:2.12px;">Inspector</span>
<span style="left:2205.0px;top:29.1px;color:#c4c4c4;letter-spacing:2.22px;">Lighting</span>
<span style="left:1946.0px;top:148.5px;color:#d0d0d0;letter-spacing:0.60px;font-weight:bold;">Right Hand</span>
<span style="left:3676.0px;top:148.5px;color:#c4c4c4;letter-spacing:2.13px;">Static</span>
<span style="left:1828.6px;top:242.5px;color:#c4c4c4;letter-spacing:4.35px;">Tag</span>
<span style="left:1946.0px;top:241.1px;color:#c4c4c4;letter-spacing:2.36px;">Untagged</span>
<span style="left:2888.0px;top:242.5px;color:#c4c4c4;letter-spacing:1.48px;">Layer</span>
<span style="left:3047.5px;top:241.1px;color:#c4c4c4;letter-spacing:1.79px;">Default</span>
<span style="left:1909.0px;top:354.5px;color:#d0d0d0;letter-spacing:1.59px;font-weight:bold;">Transform</span>
<span style="left:1744.6px;top:451.3px;color:#c4c4c4;letter-spacing:1.39px;">Position</span>
<span style="left:2603.7px;top:451.3px;color:#c4c4c4;letter-spacing:0.00px;">X</span>
<span style="left:2674.5px;top:451.3px;color:#c4c4c4;letter-spacing:0.00px;">0</span>
<span style="left:3039.0px;top:451.3px;color:#c4c4c4;letter-spacing:0.00px;">Y</span>
<span style="left:3109.5px;top:451.3px;color:#c4c4c4;letter-spacing:-0.17px;">1.3</span>
<span style="left:3478.8px;top:451.3px;color:#c4c4c4;letter-spacing:0.00px;">Z</span>
<span style="left:3546.5px;top:451.3px;color:#c4c4c4;letter-spacing:0.00px;">0</span>
<span style="left:1744.5px;top:531.1px;color:#c4c4c4;letter-spacing:1.43px;">Rotation</span>
<span style="left:2603.7px;top:531.1px;color:#c4c4c4;letter-spacing:0.00px;">X</span>
<span style="left:2674.5px;top:531.1px;color:#c4c4c4;letter-spacing:0.00px;">0</span>
<span style="left:3039.0px;top:531.1px;color:#c4c4c4;letter-spacing:0.00px;">Y</span>
<span style="left:3111.5px;top:531.1px;color:#c4c4c4;letter-spacing:0.00px;">0</span>
<span style="left:3478.8px;top:531.1px;color:#c4c4c4;letter-spacing:0.00px;">Z</span>
<span style="left:3546.5px;top:531.1px;color:#c4c4c4;letter-spacing:0.00px;">0</span>
<span style="left:1744.3px;top:610.9px;color:#c4c4c4;letter-spacing:0.93px;">Scale</span>
<span style="left:2603.7px;top:610.9px;color:#c4c4c4;letter-spacing:0.00px;">X</span>
<span style="left:3039.0px;top:610.9px;color:#c4c4c4;letter-spacing:0.00px;">Y</span>
<span style="left:3478.8px;top:610.9px;color:#c4c4c4;letter-spacing:0.00px;">Z</span>
<span style="left:1907.3px;top:726.1px;color:#d0d0d0;letter-spacing:1.11px;font-weight:bold;">Realtime View (Script)</span>
<span style="left:1768.5px;top:878.8px;color:#c4c4c4;letter-spacing:1.82px;">Components</span>
<span style="left:1827.8px;top:969.7px;color:#838383;letter-spacing:1.22px;">Right Hand (Realtime Transform)</span>
<span style="left:1768.5px;top:1087.4px;color:#c4c4c4;letter-spacing:1.39px;">Child Views</span>
<span style="left:1768.7px;top:1175.1px;color:#c4c4c4;letter-spacing:1.32px;">No Child Views</span>
<span style="left:1744.3px;top:1310.9px;color:#838383;letter-spacing:1.55px;">Owner: Offline</span>
<span style="left:2069.7px;top:1392.9px;color:#838383;letter-spacing:1.37px;">Request Ownership</span>
<span style="left:3187.0px;top:1392.8px;color:#838383;letter-spacing:1.42px;">Clear Ownership</span>
<span style="left:2363.3px;top:1477.3px;color:#838383;letter-spacing:1.33px;">Request Ownership of Self and Children</span>
<span style="left:1907.3px;top:1618.1px;color:#d0d0d0;letter-spacing:0.98px;font-weight:bold;">Realtime Transform (Script)</span>
<span style="left:1744.3px;top:1747.0px;color:#c4c4c4;letter-spacing:1.43px;">Sync</span>
<span style="left:2672.5px;top:1747.0px;color:#c4c4c4;letter-spacing:1.49px;">Position</span>
<span style="left:3101.8px;top:1747.0px;color:#c4c4c4;letter-spacing:1.54px;">Rotation</span>
<span style="left:3534.5px;top:1747.0px;color:#c4c4c4;letter-spacing:0.91px;">Scale</span>
<span style="left:1744.3px;top:1826.7px;color:#c4c4c4;letter-spacing:1.80px;">Smoothing</span>
<span style="left:2614.8px;top:1825.3px;color:#c4c4c4;letter-spacing:2.01px;">Interpolate</span>
<span style="left:1744.3px;top:1939.4px;color:#838383;letter-spacing:1.55px;">Owner: Offline</span>
<span style="left:2069.7px;top:2021.0px;color:#838383;letter-spacing:1.37px;">Request Ownership</span>
<span style="left:3187.0px;top:2021.0px;color:#838383;letter-spacing:1.42px;">Clear Ownership</span>
<span style="left:2604.3px;top:2200.9px;color:#d8d8d8;letter-spacing:1.68px;">Add Component</span>
</div>
</body></html>
